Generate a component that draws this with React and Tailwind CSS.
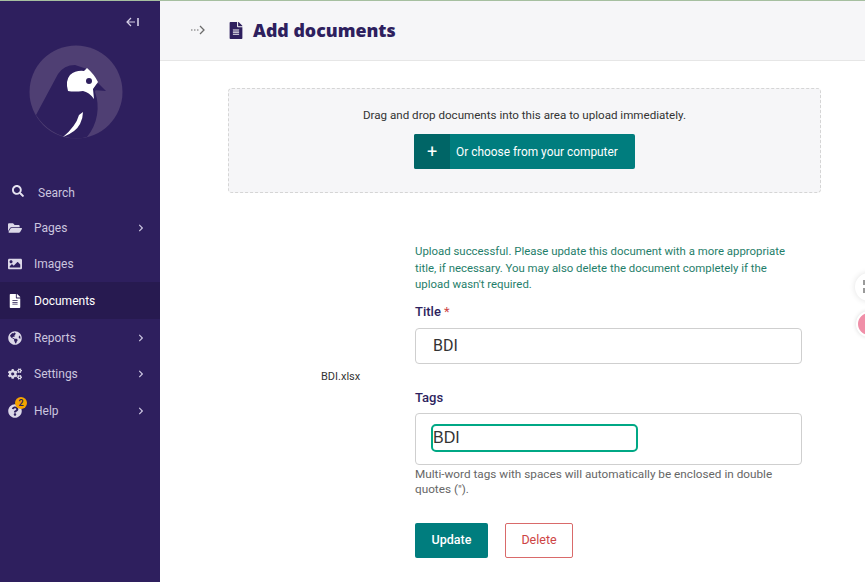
import { FaSearch, FaFolderOpen, FaImage, FaFileAlt, FaGlobeAmericas, FaCogs, FaQuestionCircle, FaChevronRight } from 'react-icons/fa'

const NAV = [
  { label: 'Pages', icon: FaFolderOpen, arrow: true, h: 'h-[36px]' },
  { label: 'Images', icon: FaImage, h: 'h-[36px]' },
  { label: 'Documents', icon: FaFileAlt, active: true, h: 'h-[37px]' },
  { label: 'Reports', icon: FaGlobeAmericas, arrow: true, h: 'h-[37px]' },
  { label: 'Settings', icon: FaCogs, arrow: true, h: 'h-[36px]' },
  { label: 'Help', icon: FaQuestionCircle, arrow: true, badge: 2, h: 'h-[38px]' },
]

function Logo() {
  return (
    <svg width="94" height="94" viewBox="0 0 94 94" className="block">
      <circle cx="47" cy="47" r="46.5" fill="#4f3f73" />
      {/* body */}
      <path d="M7 70 L29 29 Q35 20 46 20 L58 24 L68 40 L66 47 Q70 58 68 70 Q66 82 58 92 Q50 94 44 93.5 Q20 90 7 70 Z" fill="#2e1f5e" />
      {/* head */}
      <path d="M39 46 Q36 36 41 30 Q47 25 55 26 L58 23 Q65 29 69 37 L64 44 L65 54 Q60 47 54 46 Q45 47 39 46 Z" fill="#fff" />
      {/* beak */}
      <path d="M64 45 L69 38 L77 46 Z" fill="#2e1f5e" />
      <circle cx="60" cy="36" r="3" fill="#2e1f5e" />
      {/* wing */}
      <path d="M54 67 L50 70 Q47 81 34 92 Q47 87 51 79 Q54 73 54 67 Z" fill="#fff" />
    </svg>
  )
}

function Sidebar() {
  return (
    <aside className="w-[160px] shrink-0 bg-[#2e1f5e] text-[#cbc5df] text-[12px] self-stretch">
      <div className="flex justify-end pr-[21px] pt-[16px] h-[44px]">
        <svg width="13" height="10" viewBox="0 0 13 10" fill="none" stroke="#d5cfe6">
          <path d="M5 1 L1 5 L5 9 M1 5 H9" strokeWidth="1.2" />
          <path d="M12 1 V9" strokeWidth="1.6" />
        </svg>
      </div>
      <div className="pl-[29px] h-[128px]">
        <Logo />
      </div>
      <div className="flex items-center h-[37px] pl-[12px] pt-[3px]">
        <FaSearch className="w-[12px] h-[12px] text-[#e6e2f0] -mt-[5px]" />
        <span className="ml-[14px]">Search</span>
      </div>
      <nav>
        {NAV.map((item) => {
          const Icon = item.icon
          return (
            <div
              key={item.label}
              className={`flex items-center pl-[8px] pr-[15px] ${item.h} ${item.active ? 'bg-[#271a50] text-white' : ''}`}
            >
              <span className="relative w-[14px] flex justify-center">
                <Icon className={`w-[14px] h-[14px] ${item.active ? 'text-white' : 'text-[#dcd8e8]'}`} />
                {item.badge && (
                  <span className="absolute -top-[7px] left-[7px] w-[12px] h-[12px] rounded-full bg-[#f5a300] text-[#2e1f5e] text-[9px] leading-[12px] text-center font-semibold">
                    {item.badge}
                  </span>
                )}
              </span>
              <span className="ml-[12px] flex-1">{item.label}</span>
              {item.arrow && <FaChevronRight className="w-[8px] h-[8px] text-[#cbc5df]" />}
            </div>
          )
        })}
      </nav>
    </aside>
  )
}

export default function App() {
  return (
    <div className="relative h-[582px] w-[865px] overflow-hidden bg-white font-['Roboto','Noto_Sans',sans-serif]">
      <div className="h-px bg-[#a6bfa0]" />
      <div className="flex h-[581px]">
        <Sidebar />
        <main className="flex-1">
          <header className="h-[60px] bg-[#f6f6f8] border-b border-[#e6e6e6] flex items-center pl-[31px]">
            <svg width="14" height="10" viewBox="0 0 14 10" fill="none" stroke="#6b6b6b" className="mt-[-2px]">
              <path d="M0 5 H1.5 M3 5 H4.5 M6 5 H7.5" strokeWidth="1.2" />
              <path d="M9 1 L13 5 L9 9" strokeWidth="1.3" />
            </svg>
            <FaFileAlt className="ml-[24px] w-[14px] h-[17px] text-[#2e1f5e]" />
            <h1 className="ml-[10px] text-[17.8px] font-black text-[#2e1f5e] leading-none font-['Noto_Sans',sans-serif]">Add documents</h1>
          </header>

          <div className="pl-[68px] pr-[44px] pt-[27px]">
            <div className="h-[105px] border border-dashed border-[#d5d5d5] rounded-[4px] bg-[#f6f6f8] flex flex-col items-center pt-[18px]">
              <p className="text-[11.6px] leading-[16px] text-[#333]">
                Drag and drop documents into this area to upload immediately.
              </p>
              <button className="mt-[11px] h-[35px] w-[221px] flex items-center bg-[#007d7e] text-white rounded-[2px] text-[11.9px] overflow-hidden">
                <span className="w-[36px] h-full bg-[#006566] flex items-center justify-center text-[18px] font-normal">+</span>
                <span className="ml-[6px] pt-[2px]">Or choose from your computer</span>
              </button>
            </div>
          </div>

          <div className="flex pl-[161px] pt-[50px]">
            <div className="w-[94px] pt-[126px] text-[11px] text-[#333]">BDI.xlsx</div>
            <div className="w-[387px]">
              <p className="w-[375px] text-[11.4px] leading-[16.5px] text-[#1f7e6a]">
                Upload successful. Please update this document with a more appropriate title, if necessary. You may also delete the document completely if the upload wasn&apos;t required.
              </p>
              <label className="block mt-[10px] text-[13px] leading-[17px] font-medium text-[#2e1f5e]">
                Title <span className="text-[#cd4444] font-normal">*</span>
              </label>
              <div className="mt-[8px] h-[36px] border border-[#cfcfcf] rounded-[4px] flex items-center pl-[17px] text-[16px] text-[#333]">
                BDI
              </div>
              <label className="block mt-[25px] text-[13px] leading-[17px] font-medium text-[#2e1f5e]">
                Tags
              </label>
              <div className="mt-[7px] h-[52px] border border-[#cfcfcf] rounded-[4px] flex items-center pl-[15px]">
                <div className="w-[207px] h-[28px] mt-[-1px] border-2 border-[#00a885] rounded-[5px] flex items-center text-[16px] text-[#333] font-['Liberation_Sans',sans-serif]">
                  BDI
                </div>
              </div>
              <p className="mt-[2px] text-[11.75px] leading-[15px] text-[#666]">
                Multi-word tags with spaces will automatically be enclosed in double quotes (&quot;).
              </p>
              <div className="mt-[26px] flex gap-[17px]">
                <button className="w-[73px] h-[35px] bg-[#007d7e] text-white text-[12.5px] font-medium rounded-[2px]">Update</button>
                <button className="w-[68px] h-[35px] border border-[#d96a6a] text-[#cd4444] text-[12.5px] rounded-[2px]">Delete</button>
              </div>
            </div>
          </div>
        </main>
      </div>

      {/* floating widgets cut off by the window edge */}
      <div className="absolute left-[855px] top-[273px] w-[28px] h-[28px] rounded-full bg-white shadow-[0_0_6px_rgba(0,0,0,0.12)] flex flex-col gap-[3px] pt-[7px] pl-[8px]">
        <span className="block w-[5px] h-[5px] bg-[#9a9a9a]" />
        <span className="block w-[5px] h-[5px] bg-[#9a9a9a]" />
      </div>
      <div className="absolute left-[856px] top-[311px] w-[26px] h-[26px] rounded-full bg-[#f08fa8] border-[2px] border-white shadow-[0_0_4px_rgba(0,0,0,0.15)]" />
    </div>
  )
}
